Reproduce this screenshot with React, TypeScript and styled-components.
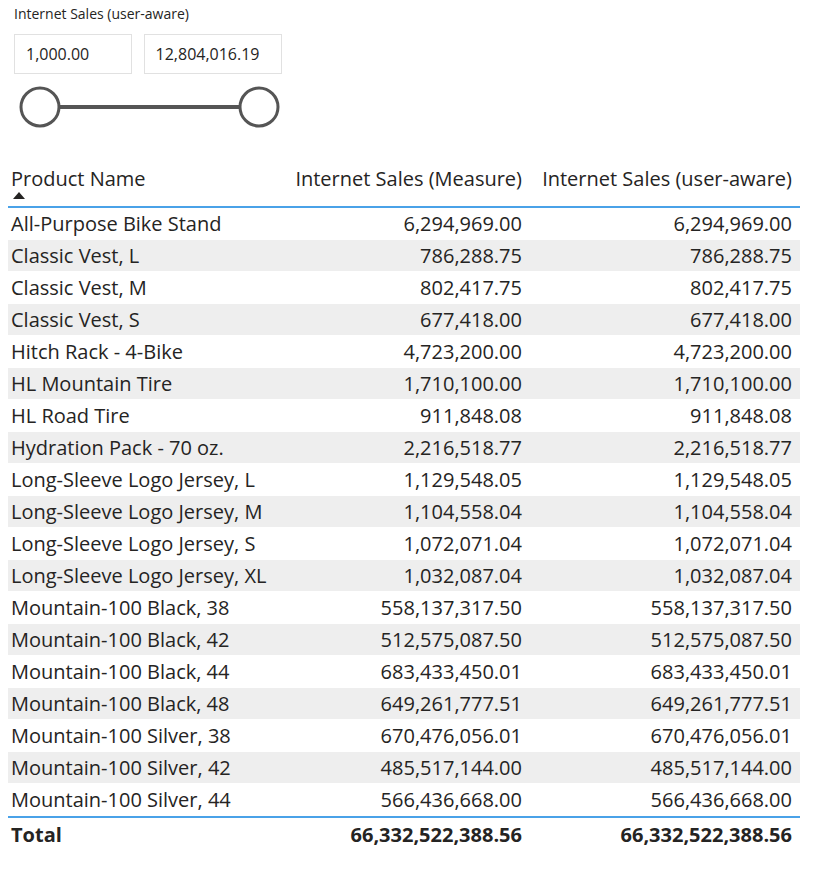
import styled, { createGlobalStyle } from 'styled-components'

const Global = createGlobalStyle`
  body { margin: 0; background: #fff; font-family: "Open Sans", "Noto Sans", sans-serif; color: #252423; }
`

const Slicer = styled.div`
  padding: 4px 0 0 14px;
  width: 268px;
`
const SlicerTitle = styled.div`
  font-size: 14px;
  color: #252423;
  height: 30px;
  line-height: 20px;
`
const Inputs = styled.div`
  display: flex;
  gap: 12px;
`
const ValueBox = styled.div<{ $w: number }>`
  width: ${p => p.$w}px;
  height: 40px;
  box-sizing: border-box;
  border: 1px solid #e1e1e1;
  font-size: 16px;
  display: flex;
  align-items: center;
  padding-left: 11px;
`

const Table = styled.div`
  margin: 28px 15px 0 8px;
  font-size: 20px;
`
const Row = styled.div<{ $shade?: boolean }>`
  display: grid;
  grid-template-columns: 277px 245px 270px;
  height: 32px;
  align-items: center;
  background: ${p => (p.$shade ? '#eeeeee' : '#fff')};
  border-bottom: 1px solid #fff;
  box-sizing: border-box;
`
const Header = styled(Row)`
  height: 48px;
  align-items: start;
  padding-top: 5px;
  border-bottom: 2px solid #4aa2e8;
`
const TotalRow = styled(Row)`
  height: 36px;
  font-weight: 700;
  border-top: 2px solid #4aa2e8;
`
const Cell = styled.div<{ $num?: boolean }>`
  padding: 0 ${p => (p.$num ? '8px' : '3px')};
  text-align: ${p => (p.$num ? 'right' : 'left')};
  white-space: nowrap;
`
const SortMark = styled.div`
  width: 0;
  height: 0;
  border-left: 6px solid transparent;
  border-right: 6px solid transparent;
  border-bottom: 7px solid #252423;
  margin: 0 0 0 2px;
`

const rows: [string, string][] = [
  ['All-Purpose Bike Stand', '6,294,969.00'],
  ['Classic Vest, L', '786,288.75'],
  ['Classic Vest, M', '802,417.75'],
  ['Classic Vest, S', '677,418.00'],
  ['Hitch Rack - 4-Bike', '4,723,200.00'],
  ['HL Mountain Tire', '1,710,100.00'],
  ['HL Road Tire', '911,848.08'],
  ['Hydration Pack - 70 oz.', '2,216,518.77'],
  ['Long-Sleeve Logo Jersey, L', '1,129,548.05'],
  ['Long-Sleeve Logo Jersey, M', '1,104,558.04'],
  ['Long-Sleeve Logo Jersey, S', '1,072,071.04'],
  ['Long-Sleeve Logo Jersey, XL', '1,032,087.04'],
  ['Mountain-100 Black, 38', '558,137,317.50'],
  ['Mountain-100 Black, 42', '512,575,087.50'],
  ['Mountain-100 Black, 44', '683,433,450.01'],
  ['Mountain-100 Black, 48', '649,261,777.51'],
  ['Mountain-100 Silver, 38', '670,476,056.01'],
  ['Mountain-100 Silver, 42', '485,517,144.00'],
  ['Mountain-100 Silver, 44', '566,436,668.00'],
]

export default function App() {
  return (
    <>
      <Global />
      <Slicer>
        <SlicerTitle>Internet Sales (user-aware)</SlicerTitle>
        <Inputs>
          <ValueBox $w={118}>1,000.00</ValueBox>
          <ValueBox $w={139}>12,804,016.19</ValueBox>
        </Inputs>
        <svg width="280" height="58" style={{ display: 'block', marginLeft: -14 }}>
          <line x1="40" y1="33" x2="259" y2="33" stroke="#555" strokeWidth="4" />
          <circle cx="40" cy="33" r="19" fill="#fff" stroke="#555" strokeWidth="3" />
          <circle cx="259" cy="33" r="19" fill="#fff" stroke="#555" strokeWidth="3" />
        </svg>
      </Slicer>
      <Table>
        <Header>
          <Cell>
            Product Name
            <SortMark />
          </Cell>
          <Cell $num>Internet Sales (Measure)</Cell>
          <Cell $num>Internet Sales (user-aware)</Cell>
        </Header>
        {rows.map(([n, v], i) => (
          <Row key={n} $shade={i % 2 === 1}>
            <Cell>{n}</Cell>
            <Cell $num>{v}</Cell>
            <Cell $num>{v}</Cell>
          </Row>
        ))}
        <TotalRow>
          <Cell>Total</Cell>
          <Cell $num>66,332,522,388.56</Cell>
          <Cell $num>66,332,522,388.56</Cell>
        </TotalRow>
      </Table>
    </>
  )
}
